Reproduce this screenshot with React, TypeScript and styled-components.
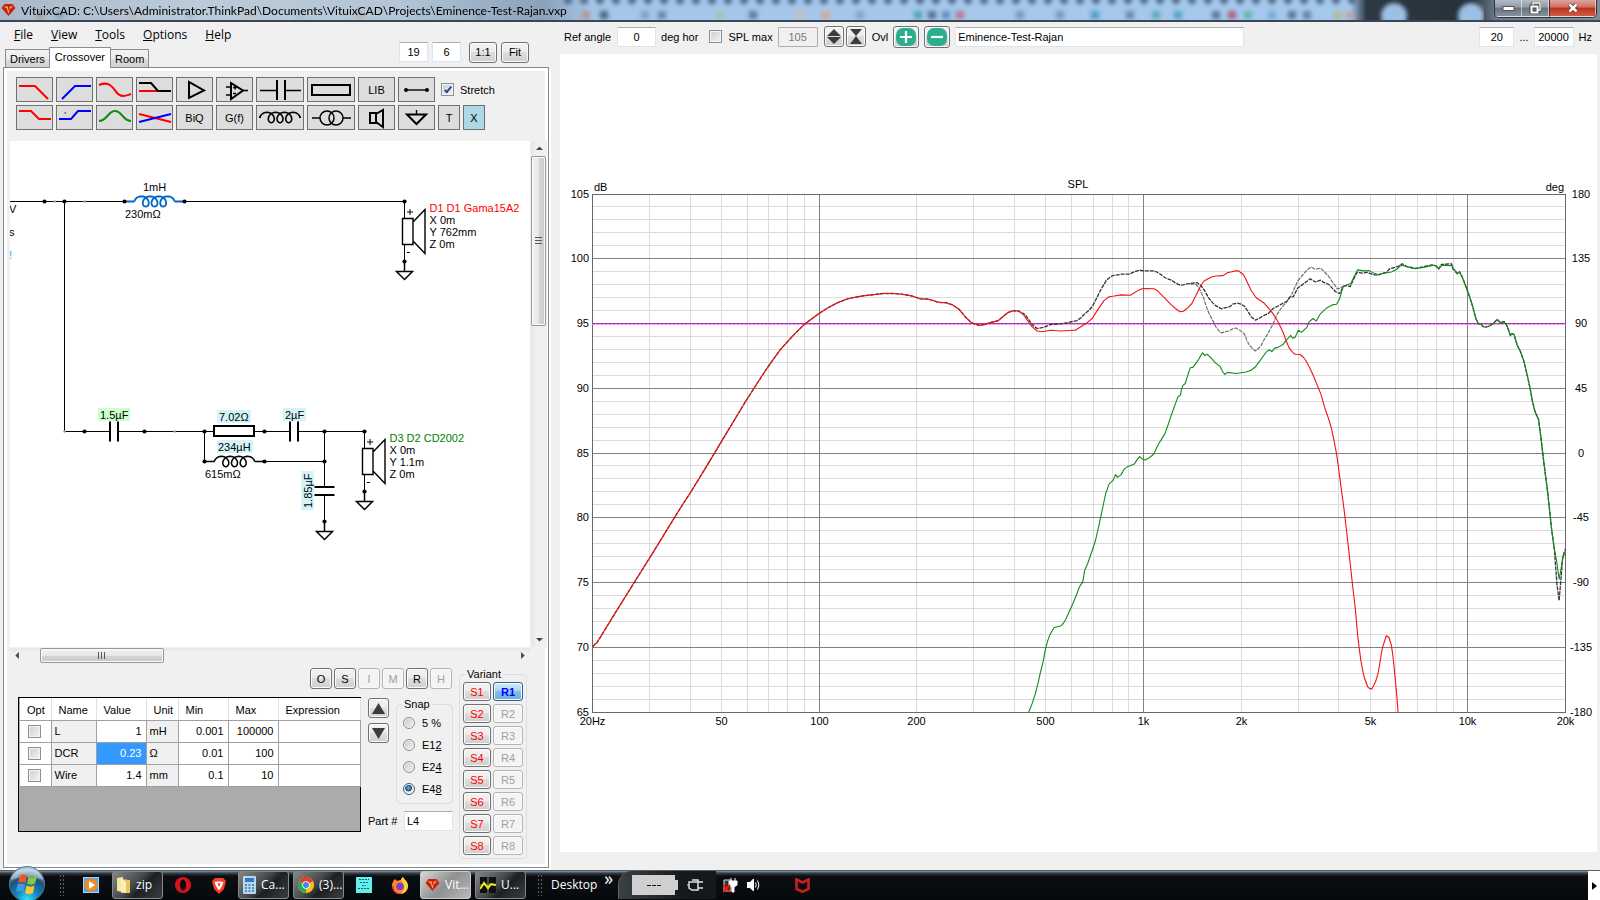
import React from 'react';
import styled, { createGlobalStyle, css } from 'styled-components';

const ui = '"Liberation Sans", Arial, sans-serif';
const shell = '"Open Sans", "Noto Sans", sans-serif';

const GlobalStyle = createGlobalStyle`
  *, *::before, *::after { box-sizing: border-box; }
  body { margin: 0; background: #f0f0f0; color: #000; font: 11px/14px ${ui}; }
  button, input { font: inherit; color: inherit; margin: 0; padding: 0; }
  svg { display: block; flex: none; }
`;

/* ---------- window frame ---------- */

const Window = styled.div`
  display: flex;
  flex-direction: column;
  min-height: 100vh;
`;

const TitleBar = styled.header`
  position: relative;
  display: flex;
  align-items: center;
  height: 22px;
  overflow: hidden;
  padding-left: 1px;
  border-bottom: 2px solid #3c4656;
  background: linear-gradient(90deg, #a9b9c9 0, #bccbd9 12%, #b3c5d6 25%, #8ba2bb 34%, #a5c6e8 37%, #a5c9ed 84.4%, #2c3843 85.4%, #25313a 92%, #6c7c8a 93.5%, #7d8d9b 100%);
`;

const TitleBlur = styled.svg`
  position: absolute;
  left: 0;
  top: 0;
`;

const AppIcon = styled.div`
  position: relative;
`;

const TitleText = styled.h1`
  position: relative;
  flex: 1;
  margin: 2px 0 0 5px;
  font: 400 12px/20px Lato, ${shell};
  white-space: nowrap;
`;

const WindowButtons = styled.div`
  position: relative;
  align-self: flex-start;
  display: flex;
  margin-right: 3px;
  height: 18px;
  border: 1px solid #2b333c;
  border-top: 0;
  border-radius: 0 0 5px 5px;
  overflow: hidden;
`;

const WindowButton = styled.button<{ $close?: boolean }>`
  display: grid;
  place-items: center;
  width: ${p => (p.$close ? 47 : 27)}px;
  border: 1px solid rgba(255, 255, 255, 0.55);
  border-top: 0;
  border-left: ${p => (p.$close ? '1px solid #5b2a25' : '0')};
  background: ${p =>
    p.$close
      ? 'linear-gradient(#dba79e, #cf6d5d 45%, #b8321d 50%, #d15c43)'
      : 'linear-gradient(#b4bdc6, #909ba6 45%, #67737f 50%, #84919e)'};
`;

const Workspace = styled.main`
  display: flex;
  flex: 1;
`;

/* ---------- left side ---------- */

const LeftPane = styled.section`
  display: flex;
  flex-direction: column;
  flex: none;
  width: 551px;
  padding-bottom: 2px;
`;

const LeftHeader = styled.div`
  display: flex;
  justify-content: space-between;
  height: 45px;
  padding-right: 22px;
`;

const MenuBar = styled.nav`
  display: flex;
  height: 25px;
  padding-left: 5px;
  font: 12px/24px ${shell};
`;

const MenuItem = styled.button`
  padding: 0 9px;
  border: 0;
  background: none;
`;

const TabStrip = styled.div`
  display: flex;
  align-items: flex-end;
  height: 20px;
  padding-left: 5px;
`;

const Tab = styled.button<{ $active?: boolean }>`
  height: ${p => (p.$active ? 21 : 18)}px;
  padding: 0 4px;
  border: 1px solid #898c95;
  border-bottom: 0;
  background: ${p => (p.$active ? '#fff' : 'linear-gradient(#f2f2f2, #ebebeb 50%, #dddddd 51%, #d2d2d2)')};
  ${p =>
    p.$active &&
    css`
      position: relative;
      padding: 0 5px 2px;
      margin: 0 -1px -1px;
    `}
`;

const ZoomControls = styled.div`
  display: flex;
  align-items: center;
  gap: 4px;
  padding: 15px 0 0;
`;

const Field = styled.input<{ $w: number; $left?: boolean }>`
  width: ${p => p.$w}px;
  height: 20px;
  padding: 0 2px;
  border: 1px solid #dde5ee;
  border-top-color: #abadb3;
  border-radius: 1px;
  background: #fff;
  text-align: ${p => (p.$left ? 'left' : 'center')};
  &:disabled {
    border-color: #afafaf;
    background: #f0f0f0;
    color: #7a7a7a;
  }
`;

const PushButton = styled.button<{ $w: number; $h?: number; $tone?: 'red' | 'active' }>`
  display: grid;
  place-items: center;
  flex: none;
  width: ${p => p.$w}px;
  height: ${p => p.$h ?? 21}px;
  border: 1px solid #707070;
  border-radius: 3px;
  box-shadow: inset 0 0 0 1px #fbfbfb;
  background: linear-gradient(#f2f2f2, #ebebeb 49%, #dddddd 50%, #cfcfcf);
  color: ${p => (p.$tone === 'red' ? '#f00' : '#000')};
  ${p =>
    p.$tone === 'active' &&
    css`
      border-color: #2c628b;
      background: linear-gradient(#d0e8f8, #a8d4f0 49%, #82c0e8 50%, #6bb2e0);
      color: #00f;
      font-weight: 700;
    `}
  &:disabled {
    border-color: #b4b4b4;
    background: #f4f4f4;
    color: #a0a0a0;
  }
`;

const TabPanel = styled.div`
  display: flex;
  flex-direction: column;
  flex: 1;
  margin: 0 2px 0 3px;
  border: 1px solid #828790;
  box-shadow: inset 0 0 0 3px #fff, 2px 2px 0 #fff;
  padding: 9px 1px 8px 6px;
`;

const PartsPalette = styled.div`
  display: flex;
  flex-direction: column;
  gap: 3px;
  padding-left: 6px;
  margin-bottom: 11px;
`;

const PaletteRow = styled.div`
  display: flex;
  align-items: center;
  gap: 3px;
`;

const PartButton = styled.button<{ $w?: number; $on?: boolean }>`
  display: grid;
  place-items: center;
  width: ${p => p.$w ?? 37}px;
  height: 25px;
  border: 1px solid #707070;
  background: ${p => (p.$on ? '#add8e6' : '#dddddd')};
`;

const CheckLabel = styled.label`
  display: flex;
  align-items: center;
  gap: 6px;
  white-space: nowrap;
`;

const CheckBox = styled.input`
  appearance: none;
  display: grid;
  place-items: center;
  width: 13px;
  height: 13px;
  border: 1px solid #8e8f8f;
  box-shadow: inset 0 0 0 1px #f4f4f4;
  background: linear-gradient(135deg, #cbcfd5, #f3f3f3);
  &:checked::after {
    content: '';
    width: 4px;
    height: 8px;
    margin-top: -2px;
    border: solid #2a4a8c;
    border-width: 0 2px 2px 0;
    transform: rotate(40deg);
  }
`;

const CanvasArea = styled.div`
  display: grid;
  grid-template: minmax(506px, 1fr) 16px / 1fr 17px;
  flex: 1;
`;

const Canvas = styled.div`
  background: #fff;
  overflow: hidden;
`;

const ScrollTrack = styled.div<{ $dir: 'v' | 'h' }>`
  display: flex;
  flex-direction: ${p => (p.$dir === 'v' ? 'column' : 'row')};
  align-items: stretch;
  background: linear-gradient(${p => (p.$dir === 'v' ? '90deg' : '180deg')}, #e6e6e6, #f0f0f0 30%, #f0f0f0);
  ${p => (p.$dir === 'v' ? 'margin-left: 1px;' : 'margin-top: 1px;')}
`;

const ScrollArrow = styled.button`
  display: grid;
  place-items: center;
  min-width: 15px;
  min-height: 15px;
  border: 0;
  background: none;
`;

const ScrollSpace = styled.div<{ $dir: 'v' | 'h' }>`
  flex: 1;
  display: flex;
  ${p => (p.$dir === 'v' ? 'padding-top: 0;' : 'padding-left: 15px;')}
`;

const ScrollThumb = styled.div<{ $dir: 'v' | 'h' }>`
  display: grid;
  place-items: center;
  border: 1px solid #979797;
  border-radius: 2px;
  box-shadow: inset 0 0 0 1px #fafafa;
  ${p =>
    p.$dir === 'v'
      ? 'width: 15px; height: 170px; background: linear-gradient(90deg, #f3f3f3, #e6e6e9 50%, #d3d5d9 51%, #c8cacc);'
      : 'width: 124px; height: 15px; background: linear-gradient(#f3f3f3, #e6e6e9 50%, #d3d5d9 51%, #c8cacc);'}
`;

const PartEditor = styled.div`
  display: flex;
  gap: 6px;
  padding: 4px 0 0 8px;
`;

const EditorMain = styled.div`
  display: flex;
  flex-direction: column;
  width: 435px;
  gap: 8px;
`;

const FlagRow = styled.div`
  display: flex;
  justify-content: flex-end;
  gap: 2px;
  padding: 1px 1px 0 0;
`;

const EditorRow = styled.div`
  display: flex;
  gap: 7px;
`;

const GridFrame = styled.div`
  width: 343px;
  height: 135px;
  border: 1px solid #000;
  background: #ababab;
  padding-left: 1px;
`;

const ParamTable = styled.table`
  width: 340px;
  border-collapse: collapse;
  table-layout: fixed;
  background: #fff;
  th {
    height: 22px;
    padding: 2px 6px 0 7px;
    border-right: 1px solid #e0e0e0;
    border-bottom: 1px solid #a0a0a0;
    font-weight: 400;
    text-align: left;
  }
`;

const Cell = styled.td<{ $fixed?: boolean; $num?: boolean; $picked?: boolean }>`
  height: 22px;
  padding: 0 4px 0 3px;
  border-right: 1px solid #a0a0a0;
  border-bottom: 1px solid #a0a0a0;
  text-align: ${p => (p.$num ? 'right' : 'left')};
  background: ${p => (p.$picked ? '#3399ff' : p.$fixed ? '#f0f0f0' : '#fff')};
  color: ${p => (p.$picked ? '#fff' : '#000')};
  input { margin: 0 auto; }
`;

const SideTools = styled.div`
  display: flex;
  flex-direction: column;
  justify-content: space-between;
  width: 85px;
`;

const SideTop = styled.div`
  display: flex;
  justify-content: space-between;
`;

const MoveButtons = styled.div`
  display: flex;
  flex-direction: column;
  gap: 5px;
  padding-top: 1px;
`;

const GroupBox = styled.fieldset<{ $kind: 'snap' | 'variant' }>`
  min-width: 0;
  margin: 0;
  border: 1px solid #d5dfe5;
  border-radius: 4px;
  legend {
    padding: 0 2px;
    margin-left: ${p => (p.$kind === 'snap' ? -1 : 2)}px;
    line-height: 14px;
  }
  ${p =>
    p.$kind === 'snap'
      ? 'width: 57px; height: 107px; padding: 1px 0 0 6px;'
      : 'width: 68px; height: 192px; padding: 1px 3px 3px;'}
`;

const RadioLabel = styled.label`
  display: flex;
  align-items: center;
  gap: 7px;
  height: 22px;
`;

const Radio = styled.input`
  appearance: none;
  width: 12px;
  height: 12px;
  border: 1px solid #8e8f8f;
  border-radius: 50%;
  box-shadow: inset 0 0 0 1px #f4f4f4;
  background: linear-gradient(135deg, #c4c8ce, #f3f3f3);
  &:checked {
    border-color: #4a5a6a;
    background: radial-gradient(circle at 45% 40%, #6fc3ee, #14456e 38%, #e8eef2 46%);
  }
`;

const PartNumber = styled.label`
  display: flex;
  align-items: center;
  justify-content: space-between;
  padding-bottom: 1px;
`;

const VariantGrid = styled.div`
  display: grid;
  grid-template-columns: 28px 30px;
  gap: 3px 2px;
`;

/* ---------- right side ---------- */

const RightPane = styled.section`
  display: flex;
  flex-direction: column;
  flex: 1;
  min-width: 0;
`;

const ChartTools = styled.div`
  display: flex;
  align-items: center;
  height: 32px;
  padding: 0 8px 3px 13px;
  gap: 6px;
  white-space: nowrap;
`;

const ToolGroup = styled.div<{ $gap: number; $end?: boolean }>`
  display: flex;
  align-items: center;
  gap: ${p => p.$gap}px;
  ${p => p.$end && 'margin-left: auto;'}
`;

const ChartSheet = styled.figure`
  flex: 1;
  margin: 0 3px 18px 9px;
  background: #fff;
  svg { width: 100%; height: auto; }
`;

/* ---------- task bar ---------- */

const TaskBar = styled.footer`
  display: flex;
  align-items: center;
  height: 30px;
  background: linear-gradient(#1b232b 0, #8b98a3 1px, #39434d 3px, #0b0f13 6px, #06090c);
  color: #fff;
  font: 12px/18px ${shell};
`;

const StartButton = styled.button`
  position: relative;
  width: 38px;
  height: 38px;
  margin: 0 12px 0 8px;
  border: 0;
  background: none;
`;

const Grip = styled.span<{ $lead?: number }>`
  flex: none;
  width: 7px;
  height: 22px;
  margin-left: ${p => p.$lead ?? 0}px;
  background: radial-gradient(circle, #59626a 40%, transparent 45%) 0 0 / 3px 4px;
`;

const LaunchIcon = styled.button<{ $w: number }>`
  display: grid;
  place-items: center;
  flex: none;
  width: ${p => p.$w}px;
  height: 28px;
  border: 0;
  background: none;
`;

const TaskButton = styled.button<{ $active?: boolean; $lead?: number }>`
  display: flex;
  align-items: center;
  gap: 5px;
  flex: none;
  width: 51px;
  height: 28px;
  margin-left: ${p => p.$lead ?? 0}px;
  padding: 0 0 0 4px;
  overflow: hidden;
  white-space: nowrap;
  border: 1px solid ${p => (p.$active ? '#c9c9c9' : '#85898c')};
  border-radius: 3px;
  background: ${p =>
    p.$active
      ? 'linear-gradient(135deg, #d8d8d8, #8f8f8f 50%, #b9b9b9)'
      : 'linear-gradient(135deg, #85878a, #45484b 45%, #1d2023 60%, #3a3e42)'};
`;

const DeskLabel = styled.span`
  margin-left: 7px;
`;

const Chevrons = styled.span`
  margin: -14px 0 0 7px;
  width: 14px;
  font-size: 18px;
`;

const BatteryPanel = styled.div`
  display: flex;
  align-items: center;
  gap: 9px;
  width: 98px;
  height: 28px;
  padding-left: 13px;
  border-radius: 14px 0 0 0;
  border-left: 1px solid #59626a;
  background: linear-gradient(90deg, #3b4043, #16191c 65%);
`;

const ShowDesktop = styled.button`
  display: grid;
  place-items: center;
  width: 12px;
  height: 29px;
  margin: 1px 0 0 auto;
  border: 0;
  background: #fff;
`;

/* ---------- schematic symbols ---------- */

const coilPath = (() => {
  const out: string[] = [];
  for (let i = -42; i <= 42; i++) {
    const t = (i / 12) * Math.PI;
    const x = 30 + (8.7 * t) / (2 * Math.PI) - 5 * Math.sin(t);
    out.push(`${x.toFixed(1)} ${(5.2 * Math.cos(t)).toFixed(1)}`);
  }
  return 'M' + out.join('L');
})();

type Pt = { x: number; y: number };

const Coil = ({ x, y, color = '#000', w = 1.5 }: Pt & { color?: string; w?: number }) => (
  <g transform={`translate(${x} ${y})`} fill="none" stroke={color} strokeWidth={w}>
    <path d={coilPath} />
    <path d="M0 0H10M50 0H60" />
  </g>
);

const Cap = ({ x, y }: Pt) => (
  <path d={`M${x - 4} ${y - 10}v20M${x + 4} ${y - 10}v20`} stroke="#000" strokeWidth="2" />
);

const Ground = ({ x, y }: Pt) => (
  <path d={`M${x} ${y}V${y + 10}M${x - 8} ${y + 10}H${x + 8}L${x} ${y + 18}Z`} fill="none" stroke="#000" strokeWidth="1.5" />
);

const Dot = ({ x, y, faint }: Pt & { faint?: boolean }) => (
  <circle cx={x} cy={y} r={faint ? 1.2 : 2.1} fill={faint ? '#999' : '#000'} />
);

const Speaker = ({ x, y, name, color, lines }: Pt & { name: string; color: string; lines: string[] }) => (
  <g transform={`translate(${x} ${y})`}>
    <path d="M0 0V17M0 43V60" stroke="#000" />
    <path d="M-2 17H8.500V43H-2ZM9 20L20.500 8V52L9 40" fill="none" stroke="#000" strokeWidth="1.400" />
    <path d="M2.500 10.500H8.500M5.500 7.500V13.500M2.500 51H5.500" stroke="#000" />
    <Dot x={0} y={0} />
    <Dot x={0} y={60} />
    <Ground x={0} y={60} />
    <text x="25" y="10" fill={color}>{name}</text>
    {lines.map((l, i) => (
      <text key={l} x="25" y={22 + i * 12}>{l}</text>
    ))}
  </g>
);

const Tag = ({ x, y, w, h = 13, fill }: Pt & { w: number; h?: number; fill: string }) => (
  <rect x={x} y={y} width={w} height={h} fill={fill} />
);

const Schematic = () => (
  <svg width="520" height="506" viewBox="10 141 520 506" fontFamily={ui} fontSize="11" role="img" aria-label="Crossover schematic">
    <g stroke="#000" fill="none">
      <path d="M10 201.500H124.500M184.500 201.500H404.500M64.500 201.500V431.500H110M118 431.500H214M254 431.500H290M298 431.500H364.500" />
      <path d="M204.500 431.500V461.500M264.500 461.500H324.500M324.500 431.500V487M324.500 495V521.500" />
    </g>
    <Tag x={98} y={408} w={32} fill="#ccffcc" />
    <Tag x={217} y={410} w={34} fill="#d4f4fa" />
    <Tag x={283} y={408} w={23} fill="#d4f4fa" />
    <Tag x={217} y={440} w={36} fill="#d4f4fa" />
    <Tag x={301} y={471} w={13} h={39} fill="#d4f4fa" />
    <Coil x={124.5} y={201.5} color="#0066cc" w={1.8} />
    <Coil x={204.5} y={461.5} />
    <Cap x={114} y={431.5} />
    <Cap x={294} y={431.5} />
    <path d="M314.500 487H334.500M314.500 495H334.500" stroke="#000" strokeWidth="2" />
    <rect x="214" y="426" width="40" height="10" fill="#fff" stroke="#000" strokeWidth="2" />
    {[44.5, 64.5, 124.5, 184.5].map(x => <Dot key={x} x={x} y={201.5} />)}
    {[54.5, 84.5].map(x => <Dot key={x} x={x} y={201.5} faint />)}
    {[84.5, 144.5, 204.5, 264.5, 324.5].map(x => <Dot key={x} x={x} y={431.5} />)}
    {[64.5, 174.5].map(x => <Dot key={x} x={x} y={431.5} faint />)}
    {[204.5, 264.5, 324.5].map(x => <Dot key={x} x={x} y={461.5} />)}
    <Dot x={324.5} y={521.5} />
    <Ground x={324.5} y={521.5} />
    <Speaker x={404.5} y={201.5} name="D1 D1 Gama15A2" color="#f00" lines={['X 0m', 'Y 762mm', 'Z 0m']} />
    <Speaker x={364.5} y={431.5} name="D3 D2 CD2002" color="#007f00" lines={['X 0m', 'Y 1.1m', 'Z 0m']} />
    <text x="9" y="213">V</text>
    <text x="9" y="236">s</text>
    <text x="9" y="259" fill="#19b4e6">!</text>
    <text x="143" y="191">1mH</text>
    <text x="125" y="218">230mΩ</text>
    <text x="100" y="419">1.5µF</text>
    <text x="219" y="421">7.02Ω</text>
    <text x="285" y="419">2µF</text>
    <text x="218" y="451">234µH</text>
    <text x="205" y="478">615mΩ</text>
    <text transform="translate(312 508) rotate(-90)">1.85µF</text>
  </svg>
);

/* ---------- palette glyphs ---------- */

const red = '#f00';
const blue = '#00f';

const Glyph = ({ w = 37, children }: { w?: number; children: React.ReactNode }) => (
  <svg width={w - 2} height="23" viewBox={`1 1 ${w - 2} 23`} fill="none" stroke="#000" strokeWidth="2">
    {children}
  </svg>
);

type Part = { label: string; w?: number; on?: boolean; text?: string; art?: React.ReactNode };

const topParts: Part[] = [
  { label: 'Low pass', art: <path d="M3 9H19L32 22" stroke={red} /> },
  { label: 'High pass', art: <path d="M6 22L19 9H35" stroke={blue} /> },
  { label: 'Shelf', art: <path d="M3 8C8 6 11 6 14 8C20 12 20 19 27 19C30 19 32 18 35 17" stroke={red} /> },
  { label: 'Step', art: <><path d="M3 14H22" stroke={red} /><path d="M3 6H15L22 14H35" /></> },
  { label: 'Buffer', art: <path d="M13 5V21L28 13.500Z" /> },
  { label: 'Op-amp', art: <><path d="M15 6V22L27 13.500Z" /><path d="M10 10H15M10 18H15M27 13.500H32M17 10.500H21M19 8.500V12.500M17 16.500H20" strokeWidth="1.500" /></> },
  { label: 'Capacitor', w: 48, art: <><path d="M4 13.500H20M29 13.500H45" strokeWidth="1.400" /><path d="M21 3V23M29 3V23" /></> },
  { label: 'Resistor', w: 48, art: <rect x="5" y="8" width="38" height="10" /> },
  { label: 'Library', text: 'LIB' },
  { label: 'Wire', art: <><path d="M8 13H29" strokeWidth="1.400" /><circle cx="8" cy="13" r="1" /><circle cx="29" cy="13" r="1" /></> },
];

const bottomParts: Part[] = [
  { label: 'Low shelf', art: <path d="M3 6H15L23 14H35" stroke={red} /> },
  { label: 'High shelf', art: <><path d="M3 14H15L22 6H35" stroke={blue} /><path d="M8.500 8H10" stroke="#555" strokeWidth="1.500" /></> },
  { label: 'Peak', art: <path d="M3 16C11 16 12 6 19 6S27 16 35 16" stroke="#128a12" /> },
  { label: 'All pass', art: <><path d="M3 9L35 17" stroke={red} /><path d="M3 17L35 9" stroke={blue} /></> },
  { label: 'Biquad', text: 'BiQ' },
  { label: 'Transfer function', text: 'G(f)' },
  { label: 'Inductor', w: 48, art: <g transform="translate(-6 12.500)"><path d={coilPath} strokeWidth="1.600" /><path d="M10 0.500V-1M50 0.500V-1" /></g> },
  { label: 'Transformer', w: 48, art: <><circle cx="20" cy="13" r="7" strokeWidth="1.500" /><circle cx="29" cy="13" r="7" strokeWidth="1.500" /><path d="M5 13H13M36 13H44" strokeWidth="1.500" /></> },
  { label: 'Driver', art: <path d="M12 8H18V18H12ZM18 9L25 5V22L18 17" /> },
  { label: 'Ground', art: <><path d="M18.500 5V9" strokeWidth="1.400" /><path d="M9 9.500H28L18.500 19Z" /></> },
  { label: 'Text', w: 22, text: 'T' },
  { label: 'Delete', w: 22, on: true, text: 'X' },
];

const Parts = ({ items }: { items: Part[] }) => (
  <>
    {items.map(p => (
      <PartButton key={p.label} type="button" aria-label={p.label} $w={p.w} $on={p.on}>
        {p.text ?? <Glyph w={p.w}>{p.art}</Glyph>}
      </PartButton>
    ))}
  </>
);

/* ---------- chart ---------- */

const PLOT = { x: 592.5, y: 194.5, w: 973, h: 518 };
const SPAN = { u: 2878, v: 1450 };

type Band = { from: number; pts: string };

const trace = (bands: Band[]) =>
  'M' +
  bands
    .flatMap(b =>
      b.pts.split(' ').map(p => {
        const [a, c] = p.split(',').map(Number);
        const x = PLOT.x + ((a + b.from) * PLOT.w) / SPAN.u;
        const y = PLOT.y + ((c - 68) * PLOT.h) / SPAN.v;
        return `${x.toFixed(1)} ${y.toFixed(1)}`;
      }),
    )
    .join('L');

const LOW = -125;
const HIGH = 1413;

const bassRise =
  '126,1334 133,1326 138,1323 195,1235 245,1159 300,1076 345,1007 390,938 413,905 450,848 486,792 520,738 555,683 580,644 607,604 640,556 680,503 720,461 752,431 795,401 820,386 850,371 880,360 905,355 930,351 960,348 985,345 1015,345 1040,347 1065,351 1095,360 1120,361 1150,370 1170,371 1190,377 1210,390 1228,411 1245,427 1268,434 1285,432 1300,427 1325,421 1340,409 1353,399 1370,393 1385,394';

const wooferPath = trace([
  { from: LOW, pts: bassRise + ' 1400,405 1412,421 1425,438 1440,450 1455,452 1480,448 1510,450 1550,448' },
  { from: HIGH, pts: '15,448 35,436 50,427 65,415 75,400 85,386 100,365 115,354 130,352 150,349 178,350 200,337 212,332 225,331 248,332 256,336 265,344 285,364 300,378 315,390 325,396 335,395 348,385 360,373 372,350 388,320 396,310 405,305 418,299 430,296 452,295 465,287 478,284 490,282 498,282 505,287 512,292 518,302 535,336 550,357 572,371 585,385 595,396 606,410 618,430 630,455 640,480 647,496 652,503 658,510 665,515 680,516 688,522 695,530 708,552 720,577 742,628 752,662 764,695 772,720 780,755 788,795 794,835 800,880 810,950 820,1030 835,1160 843,1225 850,1300 855,1340 860,1375 865,1400 870,1420 880,1446 886,1451 892,1452 898,1442 904,1430 910,1410 915,1385 920,1355 924,1335 930,1318 935,1303 943,1308 950,1330 954,1355 958,1390 962,1430 965,1460 970,1518' },
]);

const tail =
  ' 1160,300 1170,325 1180,350 1190,380 1200,415 1207,430 1214,430 1222,438 1230,439 1240,436 1250,430 1263,418 1272,427 1283,424 1290,432 1296,446 1302,463 1307,457 1313,460 1322,490 1332,508 1342,535 1352,575 1360,610 1368,650 1375,677 1385,697 1392,745 1400,810 1412,900 1424,1005 1432,1060';

const sumBand =
  '0,425 20,421 32,413 45,400 55,393 65,382 75,364 85,345 93,330 100,320 107,308 115,302 125,295 140,293 155,291 175,291 190,284 205,280 220,282 245,282 256,285 265,290 276,298 285,303 300,308 312,316 325,322 335,321 345,318 355,317 375,315';

const sumPath = trace([
  { from: LOW, pts: bassRise + ' 1405,404 1425,432 1440,443 1460,440 1480,432 1510,430 1545,424' },
  { from: HIGH, pts: sumBand + ' 383,320 390,327 400,341 410,358 420,370 430,379 440,384 447,388 460,385 472,382 480,375 495,372 505,375 515,380 525,394 535,410 548,420 560,414 572,407 585,402 600,387 615,380 630,372 640,368 650,355 660,354 673,330 690,318 700,311 710,304 725,313 740,308 752,315 765,320 775,330 785,340 797,345 808,325 818,323 828,326 838,306 848,286 865,288 880,286 895,292 910,294 925,288 935,286 945,276 960,272 970,269 982,262 995,269 1020,275 1045,270 1070,265 1080,267 1090,276 1098,264 1128,262 1132,276 1145,290 1152,284' + tail + ' 1440,1160 1446,1205 1451,1150 1456,1090 1461,1070 1465,1060' },
]);

const reversePath = trace([
  { from: HIGH, pts: '355,318 372,320 380,328 388,343 395,360 402,380 410,400 420,418 430,437 440,450 447,455 460,452 470,450 480,444 490,442 503,449 515,458 522,475 530,490 540,500 548,506 556,500 565,490 575,472 585,457 600,430 610,407 620,392 640,368 655,348 665,327 673,310 688,293 700,280 712,271 725,277 740,274 752,284 765,298 778,316 790,332 797,330 808,325' },
]);

const tweeterPath = trace([
  { from: LOW, pts: '1415,1518 1425,1494 1435,1465 1443,1435 1450,1405 1458,1375 1465,1340 1471,1318 1478,1300 1490,1281 1500,1278 1512,1275 1518,1268 1525,1257 1535,1236 1545,1215 1556,1190 1566,1165' },
  { from: HIGH, pts: '37,1153 43,1120 52,1100 60,1078 68,1057 75,1035 85,995 95,950 105,905 110,892 115,878 127,868 134,852 140,860 150,853 155,845 160,836 168,831 175,828 190,822 198,810 205,802 213,808 222,811 235,804 247,795 254,780 262,765 272,750 280,738 290,711 300,683 310,657 318,636 322,632 326,630 329,615 333,603 340,597 348,573 355,553 363,552 372,540 380,530 386,519 392,511 398,519 405,515 420,529 430,540 443,549 450,562 457,572 465,566 490,569 520,565 535,560 548,550 560,535 575,515 583,506 590,503 597,508 605,498 615,496 630,487 640,475 652,462 658,470 665,468 675,448 684,454 700,440 705,427 712,420 718,415 728,422 740,402 750,393 760,385 775,377 788,375 797,360 802,342 808,325 818,321 830,318 840,297 850,279 868,282 885,281 897,288 910,292 925,289 950,285 965,278 975,269 982,266 995,270 1020,276 1045,272 1075,266 1083,268 1090,276 1100,266 1128,267 1134,276 1145,288 1152,286' + tail + ' 1440,1100 1446,1145 1452,1115 1458,1078 1465,1076' },
]);

const Chart = () => {
  const fx = (f: number) => Math.round(PLOT.x + (PLOT.w * Math.log10(f / 20)) / 3 - 0.5) + 0.5;
  const fy = (db: number) => Math.round(PLOT.y + ((105 - db) * PLOT.h) / 40 - 1) + 0.5;
  const right = PLOT.x + PLOT.w;
  const bottom = PLOT.y + PLOT.h;
  const minorF = [10, 100, 1000, 10000]
    .flatMap(d => [1, 2, 3, 4, 5, 6, 7, 8, 9].map(n => n * d))
    .filter(f => f > 20 && f < 20000 && ![100, 1000, 10000].includes(f));
  const minorDb = Array.from({ length: 39 }, (_, i) => 66 + i).filter(d => d % 5);
  const majorDb = [70, 75, 80, 85, 90, 95, 100];
  const freqNames: [number, string][] = [
    [20, '20Hz'], [50, '50'], [100, '100'], [200, '200'], [500, '500'],
    [1000, '1k'], [2000, '2k'], [5000, '5k'], [10000, '10k'], [20000, '20k'],
  ];
  return (
    <svg viewBox="560 54 1037 798" fontFamily={ui} fontSize="11" role="img" aria-label="SPL chart">
      <path
        d={minorF.map(f => `M${fx(f)} ${PLOT.y}V${bottom}`).join('') + minorDb.map(d => `M${PLOT.x} ${fy(d)}H${right}`).join('')}
        stroke="#dcdcdc"
      />
      <path
        d={[100, 1000, 10000].map(f => `M${fx(f)} ${PLOT.y}V${bottom}`).join('') + majorDb.map(d => `M${PLOT.x} ${fy(d)}H${right}`).join('')}
        stroke="#808080"
      />
      <rect x={PLOT.x} y={PLOT.y} width={PLOT.w} height={PLOT.h} fill="none" stroke="#696969" />
      <path d={`M${PLOT.x} 323.500H${right}`} stroke="#b030b8" />
      <path d={`M${PLOT.x} 324.500H${right}`} stroke="#ee82ee" strokeDasharray="3 1" />
      <g fill="none" strokeLinejoin="round">
        <path d={reversePath} stroke="#707070" strokeWidth="1.200" strokeDasharray="4 1" />
        <path d={sumPath} stroke="#333" strokeWidth="1.300" strokeDasharray="4 1" />
        <path d={wooferPath} stroke="#f01414" strokeWidth="1.100" />
        <path d={tweeterPath} stroke="#128a1a" strokeWidth="1.100" />
      </g>
      <text x="1078" y="188" textAnchor="middle">SPL</text>
      <text x="594" y="191">dB</text>
      <text x="1564" y="191" textAnchor="end">deg</text>
      {[105, ...majorDb, 65].map(d => (
        <text key={d} x="589" y={fy(d) + 3} textAnchor="end">{d}</text>
      ))}
      {[180, 135, 90, 45, 0, -45, -90, -135, -180].map((a, i) => (
        <text key={a} x="1581" y={fy(105 - i * 5) + 3} textAnchor="middle">{a}</text>
      ))}
      {freqNames.map(([f, n]) => (
        <text key={n} x={fx(f)} y="725" textAnchor="middle">{n}</text>
      ))}
    </svg>
  );
};

/* ---------- small drawings ---------- */

const Tri = ({ dir }: { dir: 'u' | 'd' | 'l' | 'r' }) => {
  const d = { u: 'M0 7L5 2L10 7Z', d: 'M0 3L5 8L10 3Z', l: 'M7 0L2 5L7 10Z', r: 'M3 0L8 5L3 10Z' }[dir];
  return <svg width="7" height="7" viewBox="0 0 10 10"><path d={d} fill="#444" /></svg>;
};

const BigTri = ({ up }: { up?: boolean }) => (
  <svg width="13" height="11" viewBox="0 0 13 11"><path d={up ? 'M0 11L6.500 0L13 11Z' : 'M0 0H13L6.500 11Z'} fill="#3c3c3c" /></svg>
);

const Shield = ({ w = 14 }: { w?: number }) => (
  <svg width={w} height={w * 0.8} viewBox="0 0 14 12">
    <path d="M3 0H11L14 4L7 12L0 4Z" fill="#c8201c" />
    <path d="M2.500 2.500H6L7 7L8.500 2.500H11.500L8 5L7 10L5.500 4.500Z" fill="#f7d23c" />
  </svg>
);

const Sign = ({ minus }: { minus?: boolean }) => (
  <svg width="20" height="18" viewBox="0 0 20 18">
    <rect width="20" height="18" rx="7" fill="#2bae8e" />
    <path d={minus ? 'M4 9H16' : 'M4 9H16M10 3V15'} stroke="#fff" strokeWidth="2.200" />
  </svg>
);

const Orb = () => (
  <svg width="38" height="38" viewBox="0 0 38 38">
    <defs>
      <radialGradient id="orb" cx="50%" cy="95%" r="85%">
        <stop offset="0" stopColor="#2fe0ff" />
        <stop offset="0.4" stopColor="#1383bd" />
        <stop offset="0.75" stopColor="#205079" />
        <stop offset="1" stopColor="#a8c6da" />
      </radialGradient>
    </defs>
    <circle cx="19" cy="18" r="17.500" fill="url(#orb)" stroke="#52748e" />
    <path d="M3 14C7 -1 31 -1 35 14C27 10 11 10 3 14Z" fill="#fff" opacity="0.35" />
    <path d="M11.500 10C14 8 17 8 19 10L17.500 17C15 15.500 12.500 15.500 10 17Z" fill="#e8562a" />
    <path d="M20.500 10.500C23 12 26 12 29 10L27 17.500C24.500 19 21.500 19 19 17.500Z" fill="#8cc63e" />
    <path d="M9.500 18.500C12 17 14.500 17 17 18.500L15.500 26C13 24.500 10.500 24.500 8 26Z" fill="#3f9be0" />
    <path d="M18.500 19.500C21 21 24 21 26.500 19.500L25 27C22.500 28.500 19.500 28.500 17 27Z" fill="#fbc62d" />
  </svg>
);

const smudges = [
  ['#b0584c', 40], ['#566b86', 60], ['#d6a184', 130], ['#7f97b0', 190], ['#d9b28c', 250], ['#8ea7c2', 300],
  ['#c78c74', 360], ['#9cb3cb', 420], ['#6c88a8', 480], ['#b99b94', 545],
  ['#b48c8c', 586], ['#35506c', 604], ['#7699bb', 645], ['#56789c', 662], ['#8fcf9f', 720], ['#3e6f8a', 753],
  ['#d0c0b0', 800], ['#dba583', 826], ['#7d9cbb', 860], ['#3f9aa0', 918], ['#3d5c7c', 932], ['#4c7fb8', 946],
  ['#c0637c', 960], ['#6b8cab', 1020], ['#6b8cab', 1060], ['#3f8fc0', 1095], ['#5a7a9a', 1130], ['#4ca8a8', 1156],
  ['#3f9ab8', 1178], ['#456484', 1216], ['#b5475c', 1232], ['#4db39a', 1248], ['#6fa0cc', 1272], ['#4c6078', 1292],
  ['#53708e', 1307], ['#b8b878', 1338], ['#c09a9a', 1350],
] as const;

const BackdropBlur = () => (
  <TitleBlur width="1600" height="20" viewBox="0 0 1600 20" aria-hidden="true">
    <defs>
      <filter id="soft" x="0" y="-1" width="1" height="3"><feGaussianBlur stdDeviation="2" /></filter>
    </defs>
    <g filter="url(#soft)">
      {Array.from({ length: 50 }, (_, i) => <circle key={i} cx={568 + i * 16} cy="0" r="4" fill="#4a6785" />)}
      {smudges.map(([c, x]) => <rect key={x} x={x - 4} y="11" width="8" height="8" fill={c} opacity={x < 560 ? 0.35 : 0.8} />)}
      <circle cx="1394" cy="16" r="13" fill="#9cbfe4" />
      <circle cx="1471" cy="16" r="13" fill="#9cbfe4" />
    </g>
  </TitleBlur>
);

const MenuName = ({ children }: { children: string }) => (
  <MenuItem type="button"><u>{children[0]}</u>{children.slice(1)}</MenuItem>
);

const rows = [
  { name: 'L', value: '1', unit: 'mH', min: '0.001', max: '100000' },
  { name: 'DCR', value: '0.23', unit: 'Ω', min: '0.01', max: '100', picked: true },
  { name: 'Wire', value: '1.4', unit: 'mm', min: '0.1', max: '10' },
];

const columns: [string, number][] = [
  ['Opt', 31], ['Name', 45], ['Value', 50], ['Unit', 32], ['Min', 50], ['Max', 50], ['Expression', 82],
];

const flags: [string, boolean][] = [['O', true], ['S', true], ['I', false], ['M', false], ['R', true], ['H', false]];

export default function App() {
  return (
    <>
      <GlobalStyle />
      <Window>
        <TitleBar>
          <BackdropBlur />
          <AppIcon><Shield w={15} /></AppIcon>
          <TitleText>VituixCAD: C:\Users\Administrator.ThinkPad\Documents\VituixCAD\Projects\Eminence-Test-Rajan.vxp</TitleText>
          <WindowButtons>
            <WindowButton type="button" aria-label="Minimize">
              <svg width="13" height="5" viewBox="0 0 13 5"><rect x="1" y="0.500" width="11" height="4" fill="#fff" stroke="#555" /></svg>
            </WindowButton>
            <WindowButton type="button" aria-label="Restore">
              <svg width="12" height="12" viewBox="0 0 12 12" fill="none">
                <path d="M4 3V1H11V8H9" stroke="#444" strokeWidth="3" /><path d="M2.500 4.500H8.500V10.500H2.500Z" stroke="#444" strokeWidth="4" />
                <path d="M4 3V1H11V8H9" stroke="#fff" strokeWidth="1.300" /><path d="M2.500 4.500H8.500V10.500H2.500Z" stroke="#fff" strokeWidth="2" />
              </svg>
            </WindowButton>
            <WindowButton type="button" aria-label="Close" $close>
              <svg width="12" height="10" viewBox="0 0 12 10"><path d="M2.500 1.500L9.500 8.500M9.500 1.500L2.500 8.500" stroke="#53302e" strokeWidth="4" /><path d="M2.500 1.500L9.500 8.500M9.500 1.500L2.500 8.500" stroke="#fff" strokeWidth="2.500" /></svg>
            </WindowButton>
          </WindowButtons>
        </TitleBar>

        <Workspace>
          <LeftPane>
            <LeftHeader>
              <div>
                <MenuBar>
                  <MenuName>File</MenuName>
                  <MenuName>View</MenuName>
                  <MenuName>Tools</MenuName>
                  <MenuName>Options</MenuName>
                  <MenuName>Help</MenuName>
                </MenuBar>
                <TabStrip role="tablist">
                  <Tab type="button" role="tab">Drivers</Tab>
                  <Tab type="button" role="tab" aria-selected $active>Crossover</Tab>
                  <Tab type="button" role="tab">Room</Tab>
                </TabStrip>
              </div>
              <ZoomControls>
                <Field $w={29} defaultValue="19" aria-label="Grid width" />
                <Field $w={29} defaultValue="6" aria-label="Grid height" />
                <span />
                <PushButton type="button" $w={28}>1:1</PushButton>
                <PushButton type="button" $w={28}>Fit</PushButton>
              </ZoomControls>
            </LeftHeader>

            <TabPanel>
              <PartsPalette>
                <PaletteRow>
                  <Parts items={topParts} />
                  <span />
                  <CheckLabel><CheckBox type="checkbox" defaultChecked />Stretch</CheckLabel>
                </PaletteRow>
                <PaletteRow><Parts items={bottomParts} /></PaletteRow>
              </PartsPalette>

              <CanvasArea>
                <Canvas><Schematic /></Canvas>
                <ScrollTrack $dir="v">
                  <ScrollArrow type="button" aria-label="Scroll up"><Tri dir="u" /></ScrollArrow>
                  <ScrollSpace $dir="v">
                    <ScrollThumb $dir="v">
                      <svg width="7" height="8" viewBox="0 0 7 8"><path d="M0 0.500H7M0 3.500H7M0 6.500H7" stroke="#555" /></svg>
                    </ScrollThumb>
                  </ScrollSpace>
                  <ScrollArrow type="button" aria-label="Scroll down"><Tri dir="d" /></ScrollArrow>
                </ScrollTrack>
                <ScrollTrack $dir="h">
                  <ScrollArrow type="button" aria-label="Scroll left"><Tri dir="l" /></ScrollArrow>
                  <ScrollSpace $dir="h">
                    <ScrollThumb $dir="h">
                      <svg width="8" height="7" viewBox="0 0 8 7"><path d="M0.500 0V7M3.500 0V7M6.500 0V7" stroke="#555" /></svg>
                    </ScrollThumb>
                  </ScrollSpace>
                  <ScrollArrow type="button" aria-label="Scroll right"><Tri dir="r" /></ScrollArrow>
                </ScrollTrack>
              </CanvasArea>

              <PartEditor>
                <EditorMain>
                  <FlagRow>
                    {flags.map(([f, on]) => (
                      <PushButton key={f} type="button" $w={22} disabled={!on}>{f}</PushButton>
                    ))}
                  </FlagRow>
                  <EditorRow>
                    <GridFrame>
                      <ParamTable>
                        <colgroup>{columns.map(([n, w]) => <col key={n} width={w} />)}</colgroup>
                        <thead><tr>{columns.map(([n]) => <th key={n}>{n}</th>)}</tr></thead>
                        <tbody>
                          {rows.map(r => (
                            <tr key={r.name}>
                              <Cell><CheckBox type="checkbox" aria-label={`Optimize ${r.name}`} /></Cell>
                              <Cell $fixed>{r.name}</Cell>
                              <Cell $num $picked={r.picked}>{r.value}</Cell>
                              <Cell $fixed>{r.unit}</Cell>
                              <Cell $num>{r.min}</Cell>
                              <Cell $num>{r.max}</Cell>
                              <Cell />
                            </tr>
                          ))}
                        </tbody>
                      </ParamTable>
                    </GridFrame>
                    <SideTools>
                      <SideTop>
                        <MoveButtons>
                          <PushButton type="button" $w={21} $h={20} aria-label="Move up"><BigTri up /></PushButton>
                          <PushButton type="button" $w={21} $h={20} aria-label="Move down"><BigTri /></PushButton>
                        </MoveButtons>
                        <GroupBox $kind="snap">
                          <legend>Snap</legend>
                          <RadioLabel><Radio type="radio" name="snap" />5 %</RadioLabel>
                          <RadioLabel><Radio type="radio" name="snap" /><span>E1<u>2</u></span></RadioLabel>
                          <RadioLabel><Radio type="radio" name="snap" /><span>E2<u>4</u></span></RadioLabel>
                          <RadioLabel><Radio type="radio" name="snap" defaultChecked /><span>E4<u>8</u></span></RadioLabel>
                        </GroupBox>
                      </SideTop>
                      <PartNumber>Part #<Field $w={49} $left defaultValue="L4" /></PartNumber>
                    </SideTools>
                  </EditorRow>
                </EditorMain>
                <GroupBox $kind="variant">
                  <legend>Variant</legend>
                  <VariantGrid>
                    {[1, 2, 3, 4, 5, 6, 7, 8].map(n => (
                      <React.Fragment key={n}>
                        <PushButton type="button" $w={28} $h={19} $tone="red">S{n}</PushButton>
                        <PushButton type="button" $w={30} $h={19} $tone={n === 1 ? 'active' : undefined} disabled={n > 1}>R{n}</PushButton>
                      </React.Fragment>
                    ))}
                  </VariantGrid>
                </GroupBox>
              </PartEditor>
            </TabPanel>
          </LeftPane>

          <RightPane>
            <ChartTools>
              <ToolGroup $gap={5}>
                <CheckLabel>Ref angle<Field $w={39} defaultValue="0" /></CheckLabel>
                <span>deg hor</span>
              </ToolGroup>
              <ToolGroup $gap={5}>
                <span />
                <CheckLabel><CheckBox type="checkbox" />SPL max</CheckLabel>
                <Field $w={40} defaultValue="105" disabled aria-label="SPL maximum" />
              </ToolGroup>
              <ToolGroup $gap={2}>
                <PushButton type="button" $w={20} aria-label="Step scale">
                  <svg width="14" height="15" viewBox="0 0 14 15"><path d="M0 7L7 0L14 7ZM0 8H14L7 15Z" fill="#3c3c3c" /></svg>
                </PushButton>
                <PushButton type="button" $w={20} aria-label="Fit scale">
                  <svg width="12" height="15" viewBox="0 0 12 15"><path d="M0 0H12L6 7ZM6 7L12 15H0Z" fill="#3c3c3c" /></svg>
                </PushButton>
              </ToolGroup>
              <ToolGroup $gap={5}>
                <span>Ovl</span>
                <PushButton type="button" $w={26} $h={22} aria-label="Add overlay"><Sign /></PushButton>
                <PushButton type="button" $w={26} $h={22} aria-label="Remove overlay"><Sign minus /></PushButton>
                <Field $w={289} $left defaultValue="Eminence-Test-Rajan" aria-label="Project name" />
              </ToolGroup>
              <ToolGroup $gap={5} $end>
                <Field $w={35} defaultValue="20" aria-label="Lowest frequency" />
                <span>...</span>
                <Field $w={40} defaultValue="20000" aria-label="Highest frequency" />
                <span>Hz</span>
              </ToolGroup>
            </ChartTools>
            <ChartSheet><Chart /></ChartSheet>
          </RightPane>
        </Workspace>

        <TaskBar>
          <StartButton type="button" aria-label="Start"><Orb /></StartButton>
          <Grip $lead={1} />
          <LaunchIcon type="button" $w={50} aria-label="Media Player">
            <svg width="16" height="16" viewBox="0 0 16 16"><rect width="16" height="16" fill="#a8d4f0" /><rect x="1" y="1" width="14" height="14" fill="#5aa5d8" /><circle cx="8" cy="8" r="6.500" fill="#f58a1e" /><path d="M6 4L12 8L6 12Z" fill="#fff" /></svg>
          </LaunchIcon>
          <TaskButton type="button" $lead={-4}>
            <svg width="14" height="18" viewBox="0 0 14 18"><path d="M0 2L6 1V16L0 15Z" fill="#f7e7a0" /><path d="M4 3L13 4V17L4 17Z" fill="#e8c85e" /><path d="M4 2L9 6V17L4 16Z" fill="#fbf0b8" /></svg>
            zip
          </TaskButton>
          <LaunchIcon type="button" $w={40} aria-label="Opera">
            <svg width="16" height="16" viewBox="0 0 16 16"><circle cx="8" cy="8" r="8" fill="#d8121c" /><ellipse cx="8" cy="8" rx="3" ry="5.500" fill="#06090c" /></svg>
          </LaunchIcon>
          <LaunchIcon type="button" $w={32} aria-label="Brave">
            <svg width="14" height="17" viewBox="0 0 14 17"><path d="M3 1H11L14 4L12 12L7 17L2 12L0 4Z" fill="#f4402c" /><path d="M2.500 5L6 4.500H8L11.500 5L10 9L7.500 13H6.500L4 9Z" fill="#fff" /><path d="M6 6L7 9L8 6" stroke="#f4402c" fill="none" /></svg>
          </LaunchIcon>
          <TaskButton type="button" $lead={3}>
            <svg width="13" height="18" viewBox="0 0 13 18"><rect width="13" height="18" rx="1" fill="#b8d8ee" /><rect x="2" y="2" width="9" height="4" fill="#3878b8" /><path d="M2 9H11M2 12H11M2 15H11" stroke="#5a8ab8" strokeWidth="2" strokeDasharray="2 1.500" /></svg>
            Ca...
          </TaskButton>
          <TaskButton type="button" $lead={4}>
            <svg width="16" height="16" viewBox="0 0 16 16"><circle cx="8" cy="8" r="8" fill="#fbc116" /><path d="M8 8L1 4A8 8 0 0 1 15 4Z" fill="#e33b2e" /><path d="M8 8L1 4A8 8 0 0 0 8 16Z" fill="#2da94f" /><circle cx="8" cy="8" r="3.800" fill="#fff" /><circle cx="8" cy="8" r="3" fill="#4285f4" /></svg>
            (3)...
          </TaskButton>
          <LaunchIcon type="button" $w={40} aria-label="T-pad">
            <svg width="16" height="16" viewBox="0 0 16 16"><rect width="16" height="16" fill="#5ff0f0" /><path d="M3 2.500H13M4 5.500H12M6 8.500H10M2 11.500H14" stroke="#1a5a60" strokeDasharray="2 1" /></svg>
          </LaunchIcon>
          <LaunchIcon type="button" $w={33} aria-label="Firefox">
            <svg width="17" height="17" viewBox="0 0 17 17"><path d="M3 2L5 4C7 3 8 3 9 3C9 2 10 1 11 0C12 3 16 4 16 9A8 8 0 0 1 0 9C0 6 1 4 3 2Z" fill="#ff8a1f" /><path d="M11 0C12 3 16 4 16 9C16 13 13 16 9 17C14 12 12 7 9 3C9 2 10 1 11 0Z" fill="#ffd23c" /><circle cx="8" cy="9.500" r="3.800" fill="#7a3fd0" /><path d="M1 9C1 14 5 17 9 17C4 17 1 13 1 9Z" fill="#f0284a" stroke="#f0284a" /></svg>
          </LaunchIcon>
          <TaskButton type="button" $active $lead={3}><Shield w={15} />Vit...</TaskButton>
          <TaskButton type="button" $lead={4}>
            <svg width="16" height="16" viewBox="0 0 16 16"><rect width="16" height="16" fill="#101010" /><path d="M8 0V16M0 8H16" stroke="#888" /><path d="M0 12L4 6L8 11L11 7L16 8" fill="none" stroke="#e4f01e" strokeWidth="2" /></svg>
            U...
          </TaskButton>
          <Grip $lead={11} />
          <DeskLabel>Desktop</DeskLabel>
          <Chevrons>»</Chevrons>
          <BatteryPanel>
            <svg width="46" height="20" viewBox="0 0 46 20"><path d="M0 0H43V5H46V15H43V20H0Z" fill="#cfcfcf" /><path d="M15 10.500H29" stroke="#111" strokeDasharray="4 1" /></svg>
            <svg width="17" height="12" viewBox="0 0 17 12"><path d="M5 1H11V3H16M11 9H16M11 3V11H5L2 9V3Z" fill="none" stroke="#ddd" strokeWidth="1.500" /><path d="M0 6H2" stroke="#ddd" /></svg>
          </BatteryPanel>
          <LaunchIcon type="button" $w={28} aria-label="Power">
            <svg width="15" height="15" viewBox="0 0 15 15"><path d="M1 2H8V13H1Z" fill="#333" stroke="#ddd" /><path d="M8 0V3M12 0V3M6 3H14V7L11 9V14H9V9L6 7Z" fill="#fff" stroke="#fff" /><path d="M0 7L7 14M7 7L0 14" stroke="#f01414" strokeWidth="2" /></svg>
          </LaunchIcon>
          <LaunchIcon type="button" $w={20} aria-label="Volume">
            <svg width="14" height="14" viewBox="0 0 14 14" fill="none" stroke="#fff"><path d="M0 4.500H3L6.500 1V13L3 9.500H0Z" fill="#fff" /><path d="M8.500 4.500Q10 7 8.500 9.500M10.500 2.500Q13.500 7 10.500 11.500" /></svg>
          </LaunchIcon>
          <LaunchIcon type="button" $w={77} aria-label="McAfee">
            <svg width="15" height="15" viewBox="0 0 15 15"><path d="M1.500 1.500L7.500 4.500L13.500 1.500V11L7.500 13.800L1.500 11Z" fill="none" stroke="#c8201f" strokeWidth="2.600" /></svg>
          </LaunchIcon>
          <ShowDesktop type="button" aria-label="Show desktop">
            <svg width="5" height="8" viewBox="0 0 5 8"><path d="M0 0L5 4L0 8Z" fill="#000" /></svg>
          </ShowDesktop>
        </TaskBar>
      </Window>
    </>
  );
}
